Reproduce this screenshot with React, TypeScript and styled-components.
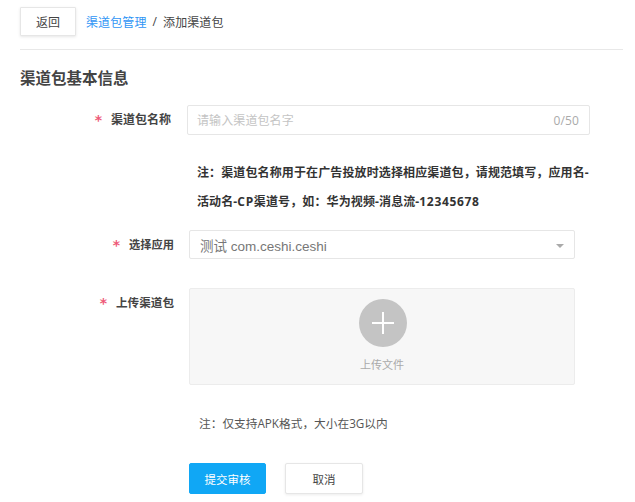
import React from 'react';
import styled, { createGlobalStyle } from 'styled-components';

const FONT = `"Open Sans", "Noto Sans CJK SC", sans-serif`;

const Global = createGlobalStyle`
  html, body { margin: 0; padding: 0; background: #fff; }
  body { font-family: ${FONT}; color: #333; }
  * { box-sizing: border-box; }
`;

const Page = styled.div`
  width: 635px;
  height: 502px;
  overflow: hidden;
  padding: 7px 12px 0 20px;
`;

const TopBar = styled.div`
  display: flex;
  align-items: flex-start;
  height: 43px;
  border-bottom: 1px solid #e8e8e8;
`;

const BackButton = styled.button`
  width: 56px;
  height: 29px;
  padding: 0;
  margin-right: 10px;
  background: #fff;
  border: 1px solid #e6e6e6;
  box-shadow: 0 1px 3px rgba(0, 0, 0, 0.1);
  border-radius: 1px;
  font: 12px ${FONT};
  color: #444;
`;

const Crumbs = styled.div`
  display: flex;
  align-items: center;
  gap: 6px;
  height: 29px;
  font-size: 12px;
  letter-spacing: 0.1px;
  color: #444;
`;

const CrumbLink = styled.span`
  color: #2f95f5;
`;

const Title = styled.h2`
  margin: 17px 0 0;
  height: 22px;
  font-size: 15.5px;
  line-height: 22px;
  font-weight: 700;
  color: #444;
`;

const Row = styled.div<{ $top: number }>`
  display: flex;
  margin-top: ${(p) => p.$top}px;
`;

const Label = styled.label<{ $h: number; $w: number; $gap: number; $size?: number; $pad?: number }>`
  display: flex;
  align-items: ${(p) => (p.$pad ? 'flex-start' : 'center')};
  justify-content: flex-end;
  width: ${(p) => p.$w}px;
  height: ${(p) => p.$h}px;
  margin-right: ${(p) => p.$gap}px;
  padding-top: ${(p) => p.$pad ?? 0}px;
  font-size: ${(p) => p.$size ?? 12}px;
  line-height: 16px;
  font-weight: 700;
  color: #444;
  flex-shrink: 0;
`;

const Star = styled.span`
  color: #ee5a78;
  font-size: 14px;
  line-height: 16px;
  font-family: "DejaVu Sans", sans-serif;
  margin-right: 9px;
`;

const NameInput = styled.div`
  display: flex;
  align-items: center;
  justify-content: space-between;
  width: 403px;
  height: 30px;
  padding: 0 10px 0 9px;
  border: 1px solid #e6e6e6;
  border-radius: 2px;
  font-size: 12px;
  letter-spacing: 0.1px;
  color: #c4c4c4;
`;

const Counter = styled.span`
  color: #aaa;
  font-size: 12px;
`;

const Note = styled.p`
  width: 410px;
  margin: 23px 0 0 177px;
  font-size: 12px;
  line-height: 29px;
  font-weight: 700;
  letter-spacing: 0.12px;
  color: #333;
`;

const NoteLatin = styled.span`
  letter-spacing: 0.65px;
`;

const Select = styled.div`
  display: flex;
  align-items: center;
  justify-content: space-between;
  width: 386px;
  height: 29px;
  padding: 0 10px;
  border: 1px solid #e6e6e6;
  border-radius: 2px;
  font-family: "Liberation Sans", "Noto Sans CJK SC", sans-serif;
  font-size: 13.5px;
  color: #777;
`;

const Caret = styled.span`
  width: 0;
  height: 0;
  margin-top: 3px;
  border-left: 4px solid transparent;
  border-right: 4px solid transparent;
  border-top: 4px solid #aaa;
`;

const Upload = styled.div`
  display: flex;
  flex-direction: column;
  align-items: center;
  width: 386px;
  height: 97px;
  padding-top: 10px;
  background: #f7f7f7;
  border: 1px solid #ececec;
  border-radius: 2px;
`;

const PlusCircle = styled.div`
  display: flex;
  align-items: center;
  justify-content: center;
  width: 48px;
  height: 48px;
  margin-left: 2px;
  border-radius: 50%;
  background: #c4c4c4;
`;

const UploadText = styled.span`
  margin-top: 11px;
  font-size: 11px;
  line-height: 14px;
  color: #aaa;
`;

const Hint = styled.p`
  margin: 30px 0 0 179px;
  font-size: 11.7px;
  line-height: 16px;
  color: #555;
`;

const Actions = styled.div`
  display: flex;
  gap: 19px;
  margin: 32px 0 0 169px;
`;

const ActionButton = styled.button<{ $primary?: boolean }>`
  height: 31px;
  width: ${(p) => (p.$primary ? 77 : 78)}px;
  padding: 0;
  border-radius: 2px;
  border: 1px solid ${(p) => (p.$primary ? '#10a7f5' : '#e6e6e6')};
  background: ${(p) => (p.$primary ? '#10a7f5' : '#fff')};
  color: ${(p) => (p.$primary ? '#fff' : '#444')};
  box-shadow: ${(p) => (p.$primary ? 'none' : '0 1px 3px rgba(0,0,0,0.08)')};
  font: 11.5px ${FONT};
`;

export default function App() {
  return (
    <Page>
      <Global />
      <TopBar>
        <BackButton>返回</BackButton>
        <Crumbs>
          <CrumbLink>渠道包管理</CrumbLink>
          <span>/</span>
          <span>添加渠道包</span>
        </Crumbs>
      </TopBar>
      <Title>渠道包基本信息</Title>
      <Row $top={16}>
        <Label $h={30} $w={151} $gap={16}>
          <Star>*</Star>渠道包名称
        </Label>
        <NameInput>
          <span>请输入渠道包名字</span>
          <Counter>0/50</Counter>
        </NameInput>
      </Row>
      <Note>
        注：渠道包名称用于在广告投放时选择相应渠道包，请规范填写，应用名-
        <br />
        活动名-<NoteLatin>CP</NoteLatin>渠道号，如：华为视频-消息流-<NoteLatin>12345678</NoteLatin>
      </Note>
      <Row $top={14}>
        <Label $h={29} $w={154} $gap={15} $size={11.25}>
          <Star>*</Star>选择应用
        </Label>
        <Select>
          <span>测试 com.ceshi.ceshi</span>
          <Caret />
        </Select>
      </Row>
      <Row $top={29}>
        <Label $h={40} $w={154} $gap={15} $size={11.6} $pad={7}>
          <Star>*</Star>上传渠道包
        </Label>
        <Upload>
          <PlusCircle>
            <svg width="24" height="24" viewBox="0 0 24 24">
              <path d="M12 1v22M1 12h22" stroke="#fff" strokeWidth="2" fill="none" />
            </svg>
          </PlusCircle>
          <UploadText>上传文件</UploadText>
        </Upload>
      </Row>
      <Hint>注：仅支持APK格式，大小在3G以内</Hint>
      <Actions>
        <ActionButton $primary>提交审核</ActionButton>
        <ActionButton>取消</ActionButton>
      </Actions>
    </Page>
  );
}
